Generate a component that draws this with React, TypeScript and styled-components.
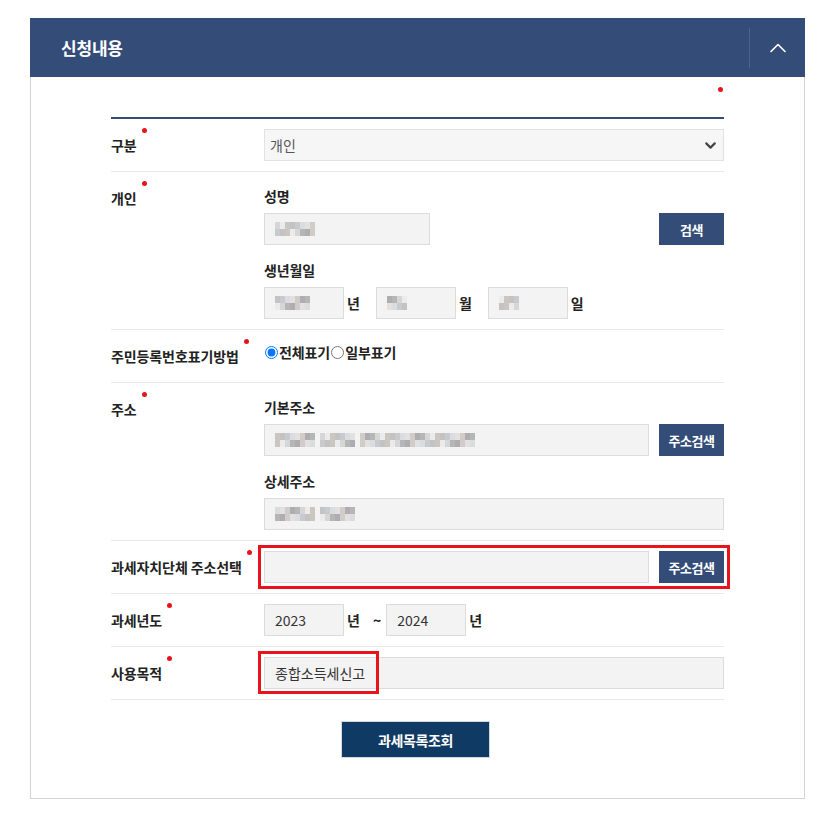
import React from "react";
import styled, { createGlobalStyle } from "styled-components";
import { ChevronDown, ChevronUp } from "lucide-react";

//# 전역 스타일
const GlobalStyle = createGlobalStyle`
  body {
    margin: 0;
    background: #fff;
    font-family: "Noto Sans CJK KR", "Noto Sans", sans-serif;
    color: #222;
  }
  * { box-sizing: border-box; }
`;

const NAVY = "#344d78";
const RED = "#e8141b";

//# 패널
const Panel = styled.section`
  width: 775px;
  margin: 18px 0 0 30px;
`;

const PanelHeader = styled.header`
  display: flex;
  align-items: center;
  justify-content: space-between;
  height: 59px;
  padding-left: 31px;
  background: ${NAVY};
`;

const PanelTitle = styled.h2`
  margin: 0;
  font-size: 17px;
  font-weight: 700;
  letter-spacing: -0.2px;
  color: #fff;
`;

const ToggleButton = styled.button`
  display: flex;
  align-items: center;
  justify-content: center;
  width: 56px;
  height: 40px;
  padding: 0;
  border: 0;
  border-left: 1px solid #4b6290;
  background: transparent;
  color: #fff;
  cursor: pointer;
`;

const PanelBody = styled.div`
  padding: 0 80px 40px;
  border: 1px solid #d4d4d4;
  border-top: 0;
`;

const RequiredNote = styled.div`
  display: flex;
  justify-content: flex-end;
  height: 40px;
  padding: 10px 1px 0 0;
`;

const Dot = styled.span`
  display: inline-block;
  width: 5px;
  height: 5px;
  border-radius: 50%;
  background: ${RED};
`;

//# 폼 테이블
const Table = styled.div`
  border-top: 2px solid ${NAVY};
`;

const Row = styled.div`
  display: grid;
  grid-template-columns: 153px 1fr;
  padding: 10px 0;
  border-bottom: 1px solid #e9e9e9;
`;

const Label = styled.div`
  font-size: 14px;
  font-weight: 700;
  line-height: 32px;
  letter-spacing: -0.1px;
  white-space: nowrap;
  color: #222;

  ${Dot} {
    vertical-align: top;
    margin: -1px 0 0 5px;
  }
`;

const Content = styled.div`
  display: flex;
  flex-direction: column;
`;

const SubLabel = styled.div<{ $first?: boolean }>`
  margin: ${({ $first }) => ($first ? "0 0 3px" : "11px 0 3px")};
  font-size: 14px;
  font-weight: 700;
  line-height: 28px;
  letter-spacing: -0.1px;
  color: #222;
`;

const Line = styled.div<{ $spread?: boolean }>`
  display: flex;
  align-items: center;
  justify-content: ${({ $spread }) => ($spread ? "space-between" : "flex-start")};
`;

const Field = styled.div<{ $width?: string }>`
  position: relative;
  display: flex;
  align-items: center;
  flex: ${({ $width }) => ($width ? "none" : "1")};
  width: ${({ $width }) => $width ?? "auto"};
  height: 32px;
  padding: 0 10px;
  border: 1px solid #dcdcdc;
  background: #f3f3f3;
  font-size: 14px;
  color: #333;
`;

const SelectBox = styled.div`
  display: flex;
  align-items: center;
  justify-content: space-between;
  height: 32px;
  padding: 0 4px 0 5px;
  border: 1px solid #e2e2e2;
  background: #f6f6f6;
  font-size: 14px;
  color: #555;
`;

const Unit = styled.span`
  margin: 0 16px 0 3px;
  font-size: 14px;
  font-weight: 700;
  color: #222;
`;

const Tilde = styled.span`
  margin: 0 5px 0 -3px;
  font-size: 14px;
  font-weight: 700;
  color: #222;
`;

const SmallButton = styled.button`
  flex: none;
  width: 65px;
  height: 32px;
  margin-left: 10px;
  padding: 0;
  border: 0;
  background: ${NAVY};
  font-family: inherit;
  font-size: 13px;
  font-weight: 700;
  letter-spacing: -0.4px;
  color: #fff;
  cursor: pointer;
`;

const RadioGroup = styled.div`
  display: flex;
  align-items: center;
  height: 24px;
  font-size: 14px;
  font-weight: 700;
  letter-spacing: -0.1px;
  color: #222;

  label {
    display: flex;
    align-items: center;
    cursor: pointer;
  }

  input {
    width: 13px;
    height: 13px;
    margin: 0 1px 0 1px;
  }
`;

//# 강조 표시
const Outlined = styled.div`
  display: flex;
  outline: 3px solid ${RED};
  outline-offset: 3px;
`;

const Highlight = styled.span`
  position: absolute;
  left: -7px;
  top: -7px;
  width: 121px;
  height: 43px;
  border: 3px solid ${RED};
  pointer-events: none;
`;

const Actions = styled.div`
  display: flex;
  justify-content: center;
  margin-top: 21px;
`;

const SubmitButton = styled.button`
  width: 149px;
  height: 37px;
  margin-right: 4px;
  border: 1px solid #d4d7dc;
  background: #0f3a63;
  font-family: inherit;
  font-size: 14px;
  font-weight: 700;
  letter-spacing: -0.4px;
  color: #fff;
  cursor: pointer;
`;

//# 모자이크 처리된 값
const MosaicRow = styled.div`
  display: flex;
`;

const MosaicColumn = styled.div`
  display: flex;
  flex-direction: column;
`;

const MosaicCell = styled.span<{ $color: string }>`
  width: 5px;
  height: 7px;
  background: ${({ $color }) => $color};
`;

const SHADES = [
  "#d6d6d6", "#c3c3c3", "#e3e1df", "#b6b6b6", "#cbc6c2",
  "#dadde0", "#aeaeb2", "#ebebeb", "#c7cbcf", "#d1ccc8",
];

function Mosaic({ groups, seed }: { groups: number[]; seed: number }) {
  const columns: (string[] | null)[] = [];
  let n = seed;
  groups.forEach((count, gi) => {
    for (let i = 0; i < count; i++) {
      const top = SHADES[(n * 7 + 3) % SHADES.length];
      const bottom = SHADES[(n * 3 + 5) % SHADES.length];
      columns.push([top, bottom]);
      n += 1;
    }
    if (gi < groups.length - 1) columns.push(null);
  });
  return (
    <MosaicRow>
      {columns.map((c, i) => (
        <MosaicColumn key={i}>
          <MosaicCell $color={c ? c[0] : "transparent"} />
          <MosaicCell $color={c ? c[1] : "transparent"} />
        </MosaicColumn>
      ))}
    </MosaicRow>
  );
}

function FieldLabel({ children }: { children: React.ReactNode }) {
  return (
    <Label>
      {children}
      <Dot />
    </Label>
  );
}

export default function App() {
  return (
    <>
      <GlobalStyle />
      <Panel>
        <PanelHeader>
          <PanelTitle>신청내용</PanelTitle>
          <ToggleButton aria-label="접기">
            <ChevronUp size={28} strokeWidth={1.4} />
          </ToggleButton>
        </PanelHeader>
        <PanelBody>
          <RequiredNote>
            <Dot />
          </RequiredNote>
          <Table>
            <Row>
              <FieldLabel>구분</FieldLabel>
              <SelectBox>
                개인
                <ChevronDown size={17} strokeWidth={3} color="#444" />
              </SelectBox>
            </Row>
            <Row>
              <FieldLabel>개인</FieldLabel>
              <Content>
                <SubLabel $first>성명</SubLabel>
                <Line $spread>
                  <Field $width="166px">
                    <Mosaic groups={[8]} seed={1} />
                  </Field>
                  <SmallButton>검색</SmallButton>
                </Line>
                <SubLabel>생년월일</SubLabel>
                <Line>
                  <Field $width="80px">
                    <Mosaic groups={[7]} seed={4} />
                  </Field>
                  <Unit>년</Unit>
                  <Field $width="80px">
                    <Mosaic groups={[4]} seed={9} />
                  </Field>
                  <Unit>월</Unit>
                  <Field $width="80px">
                    <Mosaic groups={[4]} seed={2} />
                  </Field>
                  <Unit>일</Unit>
                </Line>
              </Content>
            </Row>
            <Row>
              <FieldLabel>주민등록번호표기방법</FieldLabel>
              <RadioGroup>
                <label>
                  <input type="radio" name="rrn" defaultChecked />
                  전체표기
                </label>
                <label>
                  <input type="radio" name="rrn" />
                  일부표기
                </label>
              </RadioGroup>
            </Row>
            <Row>
              <FieldLabel>주소</FieldLabel>
              <Content>
                <SubLabel $first>기본주소</SubLabel>
                <Line>
                  <Field>
                    <Mosaic groups={[8, 7, 23]} seed={3} />
                  </Field>
                  <SmallButton>주소검색</SmallButton>
                </Line>
                <SubLabel>상세주소</SubLabel>
                <Line>
                  <Field>
                    <Mosaic groups={[8, 7]} seed={6} />
                  </Field>
                </Line>
              </Content>
            </Row>
            <Row>
              <FieldLabel>과세자치단체 주소선택</FieldLabel>
              <Outlined>
                <Field />
                <SmallButton>주소검색</SmallButton>
              </Outlined>
            </Row>
            <Row>
              <FieldLabel>과세년도</FieldLabel>
              <Line>
                <Field $width="80px">2023</Field>
                <Unit>년</Unit>
                <Tilde>~</Tilde>
                <Field $width="80px">2024</Field>
                <Unit>년</Unit>
              </Line>
            </Row>
            <Row>
              <FieldLabel>사용목적</FieldLabel>
              <Line>
                <Field>
                  종합소득세신고
                  <Highlight />
                </Field>
              </Line>
            </Row>
          </Table>
          <Actions>
            <SubmitButton>과세목록조회</SubmitButton>
          </Actions>
        </PanelBody>
      </Panel>
    </>
  );
}
